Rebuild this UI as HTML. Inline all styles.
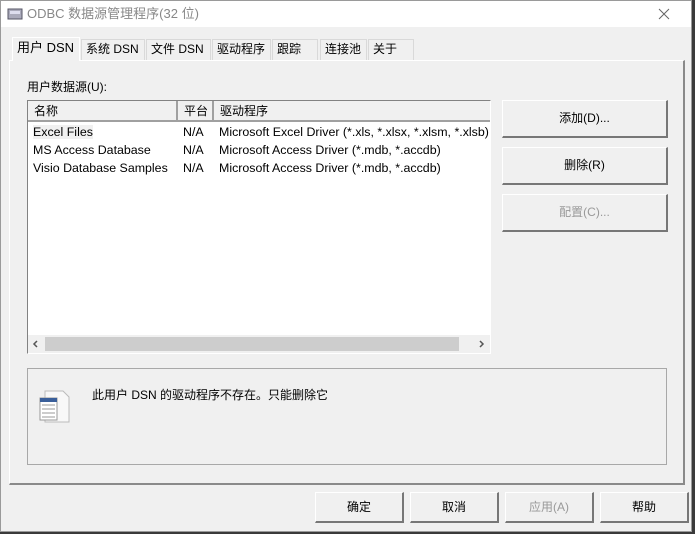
<!DOCTYPE html>
<html><head><meta charset="utf-8"><style>
*{box-sizing:border-box;margin:0;padding:0}
body{width:695px;height:534px;background:#3a3a3a;position:relative;overflow:hidden;font-family:"Liberation Sans","Noto Sans CJK SC",sans-serif;font-size:12px;color:#000}
.win{position:absolute;left:0;top:0;width:692px;height:532px;background:#f0f0f0;border:1px solid #9a9a9a}
.title{position:absolute;left:0;top:0;width:100%;height:26px;background:#fff;color:#888;font-size:13px;line-height:26px;padding-left:26px}
.ab{position:absolute;}
.tab{position:absolute;top:38px;height:21px;border:1px solid #d9d9d9;border-bottom:none;background:#f0f0f0;line-height:19px;padding-left:4px;font-size:12px}
.panel{position:absolute;left:8px;top:59px;width:676px;height:425px;border:1px solid #fff;border-right:2px solid #8a8a8a;border-bottom:2px solid #8a8a8a;background:#f0f0f0}
.btn{position:absolute;width:166px;height:38px;border:1px solid #fff;border-right:2px solid #777;border-bottom:2px solid #777;background:#f0f0f0;text-align:center;line-height:35px}
.bb{position:absolute;top:491px;width:89px;height:31px;border:1px solid #fff;border-right:2px solid #777;border-bottom:2px solid #777;background:#f0f0f0;text-align:center;line-height:28px}
.list{position:absolute;left:26px;top:99px;width:464px;height:254px;background:#fff;border:1px solid #828282;border-right-color:#fff;border-bottom-color:#fff;overflow:hidden}
.hd{position:absolute;top:0;height:21px;border-right:2px solid #a0a0a0;border-bottom:2px solid #a0a0a0;background:#f0f0f0;line-height:20px;padding-left:6px}
.row{position:absolute;left:5px;height:18px;line-height:18px;white-space:nowrap;font-size:12.4px}
</style></head><body>
<div class="win">
<div class="title">ODBC 数据源管理程序(32 位)</div>
<svg class="ab" style="left:6px;top:6px" width="16" height="14"><rect x="1" y="2" width="14" height="10" fill="#aab" stroke="#556"/><rect x="3" y="4" width="10" height="3" fill="#dde"/></svg>
<svg class="ab" style="left:657px;top:7px" width="12" height="12"><path d="M1 1L11 11M11 1L1 11" stroke="#666" stroke-width="1"/></svg>
<div class="panel"></div>
<div class="tab" style="left:11px;top:36px;width:68px;height:24px;border-color:#fff;font-size:13px">用户 DSN</div>
<div class="tab" style="left:80px;width:64px">系统 DSN</div>
<div class="tab" style="left:145px;width:65px">文件 DSN</div>
<div class="tab" style="left:211px;width:59px">驱动程序</div>
<div class="tab" style="left:271px;width:46px">跟踪</div>
<div class="tab" style="left:319px;width:47px">连接池</div>
<div class="tab" style="left:367px;width:46px">关于</div>
<div class="ab" style="left:26px;top:77px">用户数据源(U):</div>
<div class="list">
<div class="hd" style="left:0;width:150px">名称</div>
<div class="hd" style="left:150px;width:36px">平台</div>
<div class="hd" style="left:186px;width:277px;border-right:none">驱动程序</div>
<div class="row" style="top:22px"><span style="background:#f0f0f0">Excel Files</span></div>
<div class="row" style="top:40px">MS Access Database</div>
<div class="row" style="top:58px">Visio Database Samples</div>
<div class="row" style="top:22px;left:155px">N/A</div>
<div class="row" style="top:40px;left:155px">N/A</div>
<div class="row" style="top:58px;left:155px">N/A</div>
<div class="row" style="top:22px;left:191px;width:271px;overflow:hidden">Microsoft Excel Driver (*.xls, *.xlsx, *.xlsm, *.xlsb)</div>
<div class="row" style="top:40px;left:191px">Microsoft Access Driver (*.mdb, *.accdb)</div>
<div class="row" style="top:58px;left:191px">Microsoft Access Driver (*.mdb, *.accdb)</div>
<div class="ab" style="left:0;top:234px;width:462px;height:18px;background:#f0f0f0"></div>
<div class="ab" style="left:17px;top:236px;width:414px;height:14px;background:#cdcdcd"></div>
<svg class="ab" style="left:4px;top:239px" width="8" height="8"><path d="M5 1L2 4L5 7" stroke="#555" fill="none" stroke-width="1.5"/></svg>
<svg class="ab" style="left:449px;top:239px" width="8" height="8"><path d="M3 1L6 4L3 7" stroke="#555" fill="none" stroke-width="1.5"/></svg>
</div>
<div class="btn" style="left:501px;top:99px">添加(D)...</div>
<div class="btn" style="left:501px;top:146px">删除(R)</div>
<div class="btn" style="left:501px;top:193px;color:#999">配置(C)...</div>
<div class="ab" style="left:26px;top:367px;width:640px;height:97px;border:1px solid #a8a8a8"></div>
<svg class="ab" style="left:38px;top:389px" width="32" height="33"><path d="M6 1h18l6 6v25H6z" fill="#f8f8f8" stroke="#bbb"/><rect x="1" y="8" width="17" height="22" fill="#fff" stroke="#999"/><rect x="1" y="8" width="17" height="4" fill="#3a5f9a"/><path d="M3 15h13M3 19h13M3 23h13M3 27h13" stroke="#999"/></svg>
<div class="ab" style="left:91px;top:385px">此用户 DSN 的驱动程序不存在。只能删除它</div>
<div class="bb" style="left:314px">确定</div>
<div class="bb" style="left:409px">取消</div>
<div class="bb" style="left:504px;color:#999">应用(A)</div>
<div class="bb" style="left:599px">帮助</div>
</div>
</body></html>
